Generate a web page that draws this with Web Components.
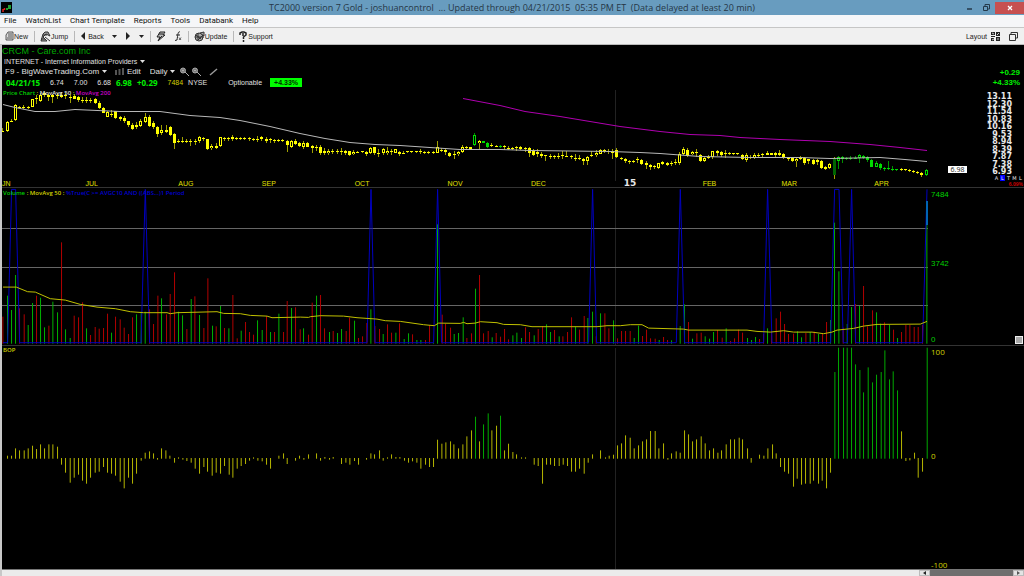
<!DOCTYPE html>
<html lang="en">
<head>
<meta charset="utf-8">
<title>TC2000 version 7 Gold</title>
<style>
html,body{margin:0;height:100%;background:#000}
body{font-family:"Liberation Sans",Arial,sans-serif;font-size:8px}
</style>
</head>
<body>
<stock-app></stock-app>
<script>
const define = (name, css, html, ready) => customElements.define(name, class extends HTMLElement {
  connectedCallback() {
    if (this.shadowRoot) return;
    const root = this.attachShadow({ mode: 'open' });
    const t = document.createElement('template');
    t.innerHTML = `<style>*{box-sizing:border-box}button,select{font:inherit;color:inherit;background:none;border:0;padding:0;margin:0;appearance:none;white-space:nowrap}svg{display:block;flex:none}${css}</style>${html}`;
    root.append(t.content.cloneNode(true));
    if (ready) ready(root);
  }
});
const caret = '<svg width="5" height="3" viewBox="0 0 5 3"><path d="M0 0h5L2.500 3z" fill="currentColor"/></svg>';

/* ---------- series: positions in thirds of a pixel ---------- */
const bop = `22:9 34:9 46:31 58:25 72:25 84:31 97:39 109:29 121:43 133:31 146:43 158:43 172:36 184:-20 196:-44 210:-74 222:-59 235:-50 247:-68 259:-77 271:-59 285:-44 297:-41 310:-27 322:-44 334:-47 346:-53 360:-71 372:-91 385:-59 397:-77 409:-47 423:-8 435:18 448:22 460:16 472:-5 484:31 497:25 509:9 523:-14 535:4 548:-5 560:-9 573:-14 585:-32 598:-47 611:-27 622:-41 636:-53 648:-44 661:-47 673:-24 687:-50 698:-59 711:-32 723:-24 736:-18 748:-8 760:4 773:-8 786:-10 799:-20 811:-32 836:9 850:16 861:-18 886:-8 898:9 911:-5 925:13 949:16 961:-8 974:5 988:-5 999:5 1024:-18 1037:-14 1049:-20 1063:-9 1075:-20 1099:-5 1112:16 1123:13 1138:25 1149:-8 1162:4 1174:13 1187:5 1199:5 1213:-8 1225:-14 1237:-10 1250:-14 1262:-32 1276:-20 1288:-27 1300:-27 1312:57 1325:45 1337:49 1351:52 1361:43 1375:31 1388:43 1400:67 1414:85 1426:126 1438:52 1450:103 1464:136 1475:85 1489:99 1501:129 1513:25 1525:45
@1536 2:20 13:13 28:4 40:4 66:-20 78:-24 91:-77 103:-20 115:-20 127:-24 141:-24 153:-20 166:-24 178:-41 190:-41 202:-32 216:-47 228:-14 241:13 265:25 280:4 291:9 304:12 316:40 328:46 340:70 354:63 366:31 379:40 391:52 403:58 415:83 429:83 440:31 454:46 467:-5 478:16 492:22 504:18 517:85 529:73 541:52 553:58 567:67 579:46 592:25 604:31 617:18 628:25 642:43 655:58 667:58 681:63 691:58 706:31 717:-14 742:12 755:9 767:31 781:43 792:16 805:-27 817:-41 829:-47 844:-86 855:-62 868:-80 880:-77 894:-77 904:-68 919:-77 930:-68 943:-91 955:-44 968:260 979:333 994:333 1005:333 1018:333 1030:283 1043:266 1054:199 1068:274 1081:229 1093:252 1107:260 1118:325 1132:238 1143:262 1156:205 1168:82 1181:-9 1193:-7 1207:18 1218:-59 1231:-41 1245:333`;
const volume = `8:395r 22:332g 34:375g 46:270g 58:370r 72:388r 84:420g 97:354g 109:332r 121:338g 133:427g 146:422r 158:350g 172:382g 184:172r 196:433g 210:459g 222:392r 235:397r 247:352r 259:430g 271:450r 285:426r 297:431r 310:429r 322:386r 334:443g 346:395r 360:403r 372:428r 385:447r 397:397r 409:388g 423:380g 435:380g 448:373r 460:417r 473:332r 484:340g 499:388r 510:327r 523:262r 535:380g 547:391g 560:432r 573:342g 584:334r 598:390g 611:429r 623:280r 637:422g 648:424r 661:363g 673:429r 686:430g 698:330r 711:460r 723:437g 736:411r 748:441r 760:449r 772:406g 786:435g 799:393r 811:441g 823:441r 836:386g 850:441r 861:348r 874:369g 886:367r 900:433r 910:430g 925:449r
@930 6:353r 19:332g 31:330r 43:430r 58:441g 69:438r 82:444g 94:432g 108:438r 118:398r 133:407g 145:459r 157:454r 170:414r 182:373g 194:423r 208:432r 219:447g 232:418r 244:443r 257:443g 268:415r 282:462g 295:445g 307:448r 320:465g 332:465g 346:465r 358:420r 370:474g 382:118g 396:389r 406:416r 421:428r 432:447g 445:444g 459:397g 470:459r 484:445r 496:311g 508:270r 520:445r 534:438r 546:457g 558:444r 571:455r 583:432r 595:463r 608:451g 620:443g 634:459g 646:427r 658:441r 672:451g 684:432r 697:423r 709:418g 721:441g 733:435r 747:454g 758:454r 772:441r 784:397r 796:426g 808:434r 822:393r 833:399g 847:380g 858:454r 871:385g 884:385r 896:430r 910:406g 922:460r
@1860 4:438r 16:438r 30:438r 42:459g 55:422g 67:453r 79:434r 91:460r 105:461r 117:465g 130:456r 142:465r 154:466g 180:423g 193:358g 205:411r 217:461g 230:445r 243:443r 255:454g 268:461g 280:441g 292:435r 306:458r 318:430g 331:468r 343:460r 355:434r 367:443r 382:459g 394:465g 406:456g 418:462r 430:447r 442:430g 454:440r 468:400r 481:380r 493:417r 505:447r 520:446r 532:439g 544:457g 557:444r 570:441g 582:440r 595:447g 607:446r 619:411r 631:405g 643:113g 656:259g 669:428r 681:417g 694:366g 706:357r 718:363g 730:303r 742:424r 757:376r 769:382g 781:416g 793:412r 808:420g 820:434r 832:459g 844:441r 857:420r 869:420r 882:426r 894:426r 907:420r 920:48g`;
/* x,high,low,bodyTop,bodyBottom; h = hollow body, g = green, d = dark green */
const candles = `8,113,130,122,126h 22,94,125,96,123h 34,86,98,92,95h 46,42,94,46,91h 58,47,55,50,53 71,46,56,50,53 84,47,58,51,54 97,27,52,28,50h 109,15,42,23,27 121,8,36,14,32h 133,5,20,8,14 146,12,32,14,20 158,12,38,15,20 172,10,28,14,18 184,5,24,15,22 196,8,28,15,18 210,14,40,22,25 222,12,28,18,26 235,18,36,22,30 247,20,40,30,34 259,22,38,30,33 271,24,40,30,33 285,24,42,28,38 297,34,58,38,54 310,50,70,54,68 322,62,82,66,80h 334,60,82,72,75 347,62,88,64,85 360,78,94,82,88 372,78,98,84,92 385,92,112,94,106 397,100,120,104,116 409,95,118,106,112 421,88,112,92,108h 435,70,98,82,96h 447,76,112,82,108 459,92,118,100,112 472,108,140,112,132 484,106,134,120,130h 498,106,128,121,125 510,108,138,112,134 523,130,178,133,158 535,146,160,153,156 547,142,160,153,156 560,146,160,152,154 572,148,168,152,155 585,148,165,152,154 598,137,158,142,152h 611,140,154,145,147 623,146,180,148,176 635,162,180,167,175h 648,158,178,169,173 660,140,172,142,168h 673,140,152,144,147 686,140,152,144,147
@690 7,136,152,142,148 20,142,150,145,147 32,140,150,145,147 44,140,150,145,147 57,142,152,145,148 70,144,153,147,150 82,138,156,146,151 95,138,152,142,147 108,142,158,146,152 121,144,158,148,151 133,146,160,149,151 146,146,156,149,151 158,148,156,151,154 171,150,186,154,164 183,150,174,152,170h 196,148,166,154,162 208,156,172,160,168 221,154,176,160,172h 233,156,172,160,170 246,164,188,168,174 258,164,184,170,172 271,166,194,170,188 283,174,196,184,189 296,178,194,182,190h 308,176,192,184,186 321,178,192,184,186 334,174,194,184,187 346,180,194,184,188 358,182,198,184,194 371,180,195,186,192h 383,182,190,185,187 396,182,190,184,187 409,184,198,186,192 421,170,192,173,189h 434,170,194,172,190 446,176,200,188,192 459,174,194,178,190h 471,172,194,182,188h 484,178,194,184,187 496,176,190,177,188h 508,182,198,186,192 521,182,196,188,192h 533,182,190,184,187 545,182,190,184,187 558,182,190,184,187 571,178,192,184,187 583,184,192,186,189 596,184,192,186,189 609,184,192,186,189 622,152,190,172,188h 635,174,186,180,183 647,176,194,181,186 659,186,202,188,198 672,184,206,192,195 684,182,198,185,193h
@1380 8,165,188,170,186h 19,168,180,172,175 32,170,180,172,176 44,130,168,135,165hg 57,150,178,154,160h 69,152,160,154,158g 82,156,174,160,170g 95,160,172,164,166 108,165,172,167,169 120,166,174,168,171g 132,164,180,168,172 145,168,180,173,177 157,172,180,174,176 170,168,182,172,175 182,168,180,172,176 195,172,186,174,178 207,170,202,174,190 220,178,198,182,194 232,176,200,186,192 245,186,204,192,198 257,194,214,196,199 270,192,206,197,200 282,194,206,197,200 295,190,206,197,200 308,184,206,196,199 320,184,202,197,200 333,194,208,198,202 345,192,214,203,206 358,196,210,204,206 370,204,226,208,214 383,198,226,202,214h 395,184,202,195,198 408,180,200,188,194h 421,178,192,179,191h 433,176,190,180,184 446,178,192,182,187 458,176,206,182,188 470,174,204,180,200 483,200,210,204,208 496,204,220,208,214 508,210,222,213,217 520,210,218,213,216 533,200,220,206,210 545,208,224,209,222 558,214,238,220,226 570,222,240,226,230 583,226,238,229,231 596,218,236,220,233h 608,212,226,217,222 621,216,228,220,224 633,214,228,220,223 646,206,226,216,220 658,186,224,191,218h 671,172,196,176,192h 683,174,200,181,197 696,184,196,187,193h 708,178,202,187,190
@2070 31,192,216,194,214 43,200,216,205,214h 56,194,208,202,205 68,182,206,184,202h 81,180,198,184,190 93,184,200,186,196 106,180,204,190,193 118,186,196,190,192 131,188,196,190,193 143,188,196,190,193 156,192,210,194,206 169,190,216,196,210h 181,196,206,201,204 194,190,206,194,202h 206,190,204,194,196 218,188,200,192,196 231,184,196,188,194 244,188,196,190,194 256,186,200,190,194 269,180,198,190,195 281,190,208,192,204 294,200,212,202,206 306,202,216,204,214 319,204,230,206,214h 331,198,210,205,207 344,202,226,205,218 356,206,222,208,214 369,206,224,210,222 381,208,226,210,216 394,210,236,213,234 407,228,240,232,238 419,218,238,222,234h 432,200,266,204,256d 444,198,236,202,214hg 457,198,220,202,206g 469,200,210,203,206g 482,198,210,203,206g 495,198,208,203,206g 508,192,218,196,204hg 520,194,208,198,203g 533,198,215,200,211g 545,208,232,210,230g 558,214,232,218,230hg 570,218,240,221,235g 583,230,242,233,238g 595,214,240,234,238g 608,228,244,237,240g 620,236,242,238,240g 633,234,244,238,241 646,236,244,238,241 658,238,246,240,243 670,240,250,243,247 683,242,252,246,249 695,246,260,248,256 708,236,258,240,255hg`;
const volumeAverage = `8,305 48,305 82,319 105,320 150,340 195,344 240,357 290,365 345,370 390,379 430,382 500,382 510,385 530,382 650,379 670,384 720,385 750,390 800,392 815,397 900,395 925,396
@930 0,394 30,391 100,392 140,397 200,401 225,406 270,408 340,418 372,421 385,413 450,414 460,411 470,415 495,413 510,409 560,412 580,417 630,418 665,424 860,424 890,421
@1860 0,421 30,418 65,418 85,428 190,431 205,434 380,434 410,438 450,440 490,436 520,440 575,440 610,445 635,440 650,434 700,429 730,422 770,417 900,416 920,408`;
const signal = `8,472 22,472 34,12 46,12 58,472 422,472 435,12 448,472
@930 170,472 182,12 194,472 370,472 382,12 394,472 835,472 847,12 859,472
@1860 168,472 180,12 193,472 430,472 442,12 455,472 631,472 643,12 656,12 669,472 681,472 694,12 706,472 907,472 920,12`;
const average50 = '3,104 15,107 35,111 55,111 75,109 120,111 160,111 190,115 220,117 240,120 270,126 300,133 325,138 350,142 375,144 400,145 430,147 460,149 500,149 530,150 610,151 640,152 660,153 700,156 750,157 800,157 830,158 880,157 905,159 927,161';
const average200 = '463,98 500,105 525,111 560,116 590,121 620,126 660,131 690,134 720,135 740,137 780,139 830,141 870,144 900,147 927,150';

const LEFT = 2;
const parse = (s, sep) => { let off = 0; const out = [];
  for (const w of s.split(/\s+/)) { if (w[0] === '@') { off = +w.slice(1); continue; }
    const flags = w.replace(/[^a-z]/g, ''); const n = w.replace(/[a-z]/g, '').split(sep).map(Number);
    n[0] = (n[0] + off) / 3 - LEFT; out.push({ n, flags }); }
  return out; };
const line = (points, color) => `<polyline points="${points}" fill="none" stroke="${color}" stroke-width="1"/>`;
const rect = (x, y, w, h, c) => `<rect x="${x.toFixed(2)}" y="${y.toFixed(2)}" width="${w}" height="${h.toFixed(2)}" fill="${c}"/>`;
const pathOf = s => parse(s, ',').map(({ n }) => `${(n[0] + .3).toFixed(1)},${(n[1] / 3 - 3 + .4).toFixed(1)}`).join(' ');
const shift = (s, dy) => s.split(' ').map(p => { const [x, y] = p.split(',').map(Number); return `${x - LEFT},${y - dy}`; }).join(' ');
const yearLine = h => `<path d="M613.500 2V${h}" stroke="#222"/>`;

function drawPrice(svg) {
  let s = yearLine(93) + '<g shape-rendering="crispEdges">';
  for (const { n, flags } of parse(candles, ',')) {
    const [x, hi, lo, top, bot] = n, X = Math.floor(x), Y = v => Math.round(v / 3 + 2);
    const c = flags.includes('d') ? '#006400' : flags.includes('g') ? '#00dc00' : '#ffff00';
    const w = flags.includes('g') ? '#009000' : '#a0a000';
    const b = Math.max(Y(bot), Y(top) + 1);
    s += rect(X, Y(hi), 1, Y(lo) - Y(hi), w) + rect(X - 1, Y(top), 3, b - Y(top), c);
    if (flags.includes('h')) s += rect(X, Y(top) + 1, 1, Math.max(1, b - Y(top) - 2), '#000');
  }
  svg.innerHTML = s + '</g>' + line(shift(average50, 87.5), '#b8b8b8') + line(shift(average200, 87.5), '#b000b0');
}
function drawVolume(svg) {
  let s = yearLine(157);
  for (const y of [40, 79, 117]) s += rect(0, y, 926, 1, '#666');
  for (const { n: [x, y], flags } of parse(volume, ':')) s += rect(x - .3, y / 3 - 3, 1, 158.700 - y / 3, flags === 'r' ? '#b00000' : '#00b000');
  svg.innerHTML = s + line(pathOf(signal), '#0000c0') + line(pathOf(volumeAverage), '#c0c000')
    + '<path d="M925 13V37" stroke="#0064b4" stroke-width="2"/>';
}
function drawBop(svg) {
  let s = yearLine(223);
  for (const { n: [x, v] } of parse(bop, ':')) { const h = Math.abs(v) / 3;
    const green = v > 190 || [126, 103, 136, 129].includes(v);
    s += rect(x - .3, v > 0 ? 112.700 - h : 112, 1, h, green ? '#00a800' : '#b4b400'); }
  svg.innerHTML = s;
}

define('title-bar', `
:host{display:grid;grid-template-columns:1fr auto 1fr;align-items:center;height:15px;background:#689cbf;color:#263746;font:9px/15px "Open Sans","Noto Sans",sans-serif}
h1{font:inherit;margin:0;white-space:pre}
.win{display:flex;justify-content:flex-end;align-items:center}
.win button{width:17px;height:12px;display:grid;place-items:center}
.win .x{width:29px;background:#c75050}
.logo{padding-left:1px}`,
`<div class="logo"><svg width="11" height="11" viewBox="0 0 11 11"><path d="M0 0h11v11H0z"/><path d="M2 7v3M3.500 6v2" stroke="#e02020" stroke-width="1.500"/><path d="M5 6h2v2H5zM7 3h3v4H7z" fill="#20a030"/></svg></div>
<h1>TC2000 version 7 Gold - joshuancontrol  ... Updated through 04/21/2015  05:35 PM ET  (Data delayed at least 20 min)</h1>
<div class="win"><button aria-label="Minimize"><svg width="7" height="7"><path d="M1 5h5" stroke="#24394a" stroke-width="1.500"/></svg></button>
<button aria-label="Restore"><svg width="7" height="7" fill="none" stroke="#24394a"><path d="M.5 2.500h4v4h-4zM2 2V.5h4.500V5H5"/></svg></button>
<button class="x" aria-label="Close"><svg width="6" height="6"><path d="M1 1l4 4M5 1L1 5" stroke="#fff" stroke-width="1.300"/></svg></button></div>`);

define('menu-bar', `
:host{display:block;height:13px;background:#f5f6f8;border-bottom:1px solid #c6c6c6;color:#111;font:8px/12px Roboto,"Liberation Sans",sans-serif}
nav{display:flex;gap:9px;padding-left:4px}`,
`<nav aria-label="Main"><button>File</button><button>WatchList</button><button>Chart Template</button><button>Reports</button><button>Tools</button><button>Databank</button><button>Help</button></nav>`);

define('tool-bar', `
:host{display:flex;align-items:center;height:17px;padding:0 6px 0 5px;background:#f0f0f0;border-bottom:1px solid #bbb;color:#222;font:7px/15px "Liberation Sans",Arial,sans-serif}
button{display:flex;align-items:center}
i{width:1px;height:11px;background:#b8b8b8;margin:0 5px 0 6px}
.gap{margin-left:8px}.push{margin-left:auto}.near{margin-left:4px}`,
`<button><svg width="9" height="10" viewBox="0 0 9 10" fill="#ddd" stroke="#333" stroke-width=".8"><path d="M3 1h5v8H1V4zM3 3h4M3 5h4M2 7h5"/></svg>New</button><i></i>
<button><svg width="11" height="11" viewBox="0 0 11 11" fill="#999" stroke="#333"><path d="M1 10l2-7 2-2h3l2 4-4-2-3 3 4 4zM5 6l5 4M3 4h4M1 8h4" /></svg>Jump</button><i></i>
<button><svg width="8" height="8"><path d="M5 0v8L1 4z" fill="#222"/></svg>Back</button>
<button class="gap" aria-label="Back history">${caret}</button>
<button class="gap" aria-label="Forward"><svg width="6" height="8"><path d="M1 0v8l4-4z" fill="#222"/></svg></button>
<button class="gap" aria-label="Forward history">${caret}</button><i></i>
<button aria-label="Quick scan"><svg width="10" height="11" viewBox="0 0 10 11" fill="#bbb" stroke="#222"><path d="M4 1h5L7 4h2L2 10l2-4H1zM3 3h4M3 8l3-3"/></svg></button>
<button class="gap" aria-label="Formula"><svg width="8" height="10" viewBox="0 0 8 10" fill="none" stroke="#222"><path d="M6 1C4 0 4 3 3 9L1 9.500M2 4h4"/><path d="M5 6.500l2 2.500M7 6.500L5 9" stroke-width=".7"/></svg></button><i></i>
<button><svg width="11" height="11" viewBox="0 0 11 11" fill="#aaa" stroke="#333"><circle cx="5" cy="6" r="4"/><path d="M2 4l5 4M4 2v7M1 6h9M6 2l4-1v4zM4 9l4-4"/></svg>Update</button><i></i>
<button><svg width="9" height="11" viewBox="0 0 9 11" fill="none" stroke="#222" stroke-width="1.500"><path d="M1 4V2l2-1h2l2 1v2L4.500 6v2M4.500 9v2M4 2v3"/></svg>Support</button>
<button class="push">Layout</button>
<button class="near" aria-label="Layout grid"><svg width="10" height="9" fill="#222"><path d="M0 0h4v3H0zM5 0h4v4H5zM0 4h4v1H0zM0 6h3v3H0zM5 5h4v4H5z"/><path d="M1 1l2 1M6 3l2-2M1 8l2-1M6 7h2" stroke="#ccc"/></svg></button>
<button class="gap" aria-label="Windows"><svg width="9" height="9" fill="none" stroke="#333"><path d="M.5 2.500h6v6h-6zM2 2V.5h6.500V6H7"/></svg></button>`);

define('symbol-header', `
:host{display:grid;grid-template-columns:1fr auto;height:43px;padding:1px 4px 0 0;color:#e0e0e0}
.row{display:flex;align-items:center;height:11px;white-space:nowrap}
h2{margin:0;font:9px/10px "Liberation Sans",Arial,sans-serif;color:#00a800}
label{display:flex;align-items:center;gap:2px}
.net{font-size:7px;height:10px;padding-left:2px}.list{padding-left:3px;font-size:8px}
.edit{display:flex;align-items:center;gap:3px;margin-left:8px}
.daily{margin:0 4px 0 9px}
.draw{margin-left:6px}
.quote{padding-left:4px;font:7px/11px "Liberation Sans",Arial,sans-serif;gap:5px}
b{color:#00f000;font:bold 8px/11px "Open Sans","Noto Sans",sans-serif}.vol{color:#d0d000}
mark{background:#0f0;color:#003000;font-weight:700;line-height:9px;padding:0 1px;width:32px;text-align:center}
.wide{margin-right:5px}
.opt{margin:0 3px 0 16px}
.chg{align-self:end;text-align:right;font:bold 8px/10px "Liberation Sans",Arial,sans-serif;color:#00f000}`,
`<div><h2>CRCM - Care.com Inc</h2>
<div class="row net"><label><select aria-label="Industry"><option>INTERNET - Internet Information Providers</option></select>${caret}</label></div>
<div class="row list"><label><select aria-label="Watchlist"><option>F9 - BigWaveTrading.Com</option></select>${caret}</label>
<button class="edit"><svg width="9" height="7"><path d="M1 7V2M4.500 7V1M8 7V0" stroke="#555" stroke-width="2"/></svg>Edit</button>
<label class="daily"><select aria-label="Period"><option>Daily</option></select>${caret}</label>
<button aria-label="Zoom in"><svg width="12" height="9" fill="#777" stroke="#aaa"><circle cx="4" cy="3.500" r="2.500"/><path d="M6 5l4 4M3 3.500h2M4 2.500v2"/></svg></button>
<button aria-label="Zoom out"><svg width="12" height="9" fill="#777" stroke="#aaa"><circle cx="4" cy="3.500" r="2.500"/><path d="M6 5l4 4M3 3.500h2"/></svg></button>
<button class="draw" aria-label="Draw"><svg width="10" height="8"><path d="M1 7l7-6" stroke="#999" stroke-width="1.500"/></svg></button></div>
<div class="row quote"><b class="wide">04/21/15</b><span class="wide">6.74</span><span class="wide">7.00</span><span>6.68</span><b>6.98</b><b class="wide">+0.29</b><span class="vol">7484</span><span>NYSE</span><span class="opt">Optionable</span><mark>+4.33%</mark></div></div>
<div class="chg">+0.29<br>+4.33%</div>`);

const paneCss = `
:host{display:grid;grid-template-columns:minmax(0,928fr) 94px;min-height:0;border-bottom:1px solid #333}
.plot{position:relative;min-height:0;min-width:0}
.plot>svg{position:absolute;width:100%;height:100%}
.legend{position:absolute;left:1px;white-space:pre;font:600 6px/9px "Open Sans","Noto Sans",sans-serif;color:#d0d000}
.g{color:#00d000}.w{color:#e0e0e0}.m{color:#c800c8}.b{color:#0000d0}`;

define('price-pane', paneCss + `
.legend{top:1px}
.months span{position:absolute;bottom:0;font:7px/7px "Liberation Sans",Arial,sans-serif;color:#e0e000}
.months .yr{font:bold 9px/8px "DejaVu Sans",sans-serif;color:#e8e8e8}
.axis{display:flex;flex-direction:column;position:relative;padding-top:5px;color:#e8e8e8}
.scale{flex:1;display:flex;flex-direction:column;justify-content:space-between;text-align:right;padding-right:12px;font:bold 8px/7px "DejaVu Sans",sans-serif}
.flag{position:absolute;left:18px;bottom:14px;width:19px;background:#fff;color:#222;text-align:center;font:7px/7px "Open Sans",sans-serif}
.modes{display:flex;justify-content:flex-end;gap:1px;padding-right:1px;font:5px/6px "DejaVu Sans",sans-serif}
.modes button{width:5px}.modes .on{background:#00f}
.pct{text-align:right;padding-right:1px;color:#d00000;font:bold 5px/6px "Liberation Sans",sans-serif}`,
`<div class="plot"><svg viewBox="0 0 928 99" preserveAspectRatio="none"></svg>
<div class="legend"><span class="g">Price Chart</span> : <span class="w">MovAvg 50</span> : <span class="m">MovAvg 200</span></div>
<div class="months"><span style="left:0">JN</span><span style="left:9%">JUL</span><span style="left:19%">AUG</span><span style="left:28%">SEP</span><span style="left:38%">OCT</span><span style="left:48%">NOV</span><span style="left:57%">DEC</span><span class="yr" style="left:67%">15</span><span style="left:75.500%">FEB</span><span style="left:84%">MAR</span><span style="left:94%">APR</span></div></div>
<div class="axis"><div class="scale">${[13.11,12.3,11.54,10.83,10.16,9.53,8.94,8.39,7.87,7.38,6.93].map(v => `<span>${v.toFixed(2)}</span>`).join('')}</div>
<div class="flag">6.98</div><div class="modes"><button>A</button><button class="on">L</button><button>T</button><button>M</button><button>L</button></div><div class="pct">6.09%</div></div>`,
r => drawPrice(r.querySelector('.plot>svg')));

define('volume-pane', paneCss + `
.legend{top:1px}
.axis{display:grid;grid-template-rows:auto 60fr auto 67fr auto;position:relative;padding:2px 0 1px 1px;font:8px/9px "Liberation Sans",Arial,sans-serif;color:#00d000}
.axis span:nth-of-type(2){grid-row:3}.axis span:nth-of-type(3){grid-row:5}
.grip{position:absolute;right:1px;bottom:1px;width:8px;height:8px;background:#a8a8a8;border:1px solid #eee}`,
`<div class="plot"><svg viewBox="0 0 928 157" preserveAspectRatio="none"></svg>
<div class="legend"><span class="g">Volume</span> : MovAvg 50 : <span class="b">%True(C &gt;= AVGC10 AND ((ABS...)1 Period</span></div></div>
<div class="axis"><span>7484</span><span>3742</span><span>0</span><button class="grip" aria-label="Resize pane"></button></div>`,
r => drawVolume(r.querySelector('.plot>svg')));

define('bop-pane', paneCss + `
:host{border:0}
.axis{display:grid;grid-template-rows:auto 95fr auto 101fr auto;padding:1px 0 0 1px;font:8px/9px "Open Sans","Noto Sans",sans-serif;color:#d0d000}
.axis span:nth-of-type(2){grid-row:3}.axis span:nth-of-type(3){grid-row:5}`,
`<div class="plot"><svg viewBox="0 0 928 223" preserveAspectRatio="none"></svg><div class="legend">BOP</div></div>
<div class="axis"><span>100</span><span>0</span><span>-100</span></div>`,
r => drawBop(r.querySelector('.plot>svg')));

define('time-scroller', `
:host{display:flex;height:7px;background:#ebebeb;border-top:1px solid #777}
.track{flex:1}.thumb{width:83px;background:#6e6e6e}
button{width:11px;display:grid;place-items:center;background:#e4e4e4;border:1px solid #bbb}`,
`<div class="track"></div><button aria-label="Scroll left"><svg width="3" height="4"><path d="M3 0v4L0 2z" fill="#222"/></svg></button><div class="thumb"></div><button aria-label="Scroll right"><svg width="3" height="4"><path d="M0 0v4l3-2z" fill="#555"/></svg></button>`);

define('stock-app', `
:host{display:flex;flex-direction:column;height:100vh;background:#000}
main{flex:1;min-height:0;display:grid;grid-template-rows:auto 100fr 158fr 223fr auto;border-left:2px solid #c8c8c8}`,
`<title-bar></title-bar><menu-bar></menu-bar><tool-bar></tool-bar>
<main><symbol-header></symbol-header><price-pane></price-pane><volume-pane></volume-pane><bop-pane></bop-pane><time-scroller></time-scroller></main>`);
</script>
</body>
</html>
